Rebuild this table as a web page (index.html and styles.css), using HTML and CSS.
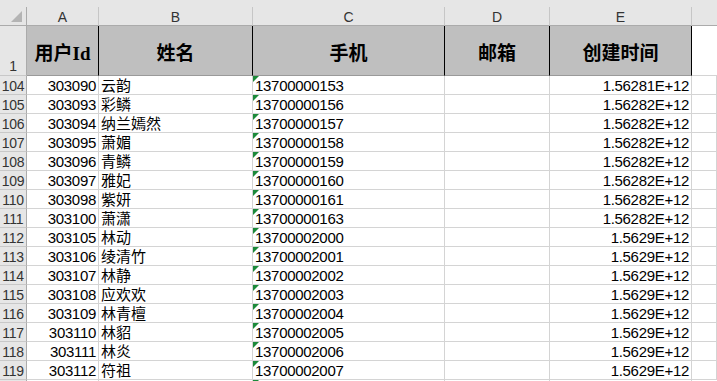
FILE: index.html
```html
<!DOCTYPE html>
<html lang="zh-CN">
<head>
<meta charset="utf-8">
<title>Sheet</title>
<link rel="stylesheet" href="styles.css">
</head>
<body>
<div class="sheet">
  <div class="strip"></div>

  <div class="corner"><svg width="11" height="11" viewBox="0 0 11 11"><polygon points="11,0 11,11 0,11" fill="#b4b4b4"/></svg></div>
  <div class="colhead">A</div>
  <div class="colhead">B</div>
  <div class="colhead">C</div>
  <div class="colhead">D</div>
  <div class="colhead">E</div>
  <div class="colhead last"></div>

  <div class="rowhead first">1</div>
  <div class="hd">用户Id</div>
  <div class="hd">姓名</div>
  <div class="hd">手机</div>
  <div class="hd">邮箱</div>
  <div class="hd">创建时间</div>
  <div class="hd blank"></div>

  <div class="rowhead">104</div><div class="c num">303090</div><div class="c txt">云韵</div><div class="c tel">13700000153</div><div class="c"></div><div class="c num">1.56281E+12</div><div class="c"></div>
  <div class="rowhead">105</div><div class="c num">303093</div><div class="c txt">彩鳞</div><div class="c tel">13700000156</div><div class="c"></div><div class="c num">1.56282E+12</div><div class="c"></div>
  <div class="rowhead">106</div><div class="c num">303094</div><div class="c txt">纳兰嫣然</div><div class="c tel">13700000157</div><div class="c"></div><div class="c num">1.56282E+12</div><div class="c"></div>
  <div class="rowhead">107</div><div class="c num">303095</div><div class="c txt">萧媚</div><div class="c tel">13700000158</div><div class="c"></div><div class="c num">1.56282E+12</div><div class="c"></div>
  <div class="rowhead">108</div><div class="c num">303096</div><div class="c txt">青鳞</div><div class="c tel">13700000159</div><div class="c"></div><div class="c num">1.56282E+12</div><div class="c"></div>
  <div class="rowhead">109</div><div class="c num">303097</div><div class="c txt">雅妃</div><div class="c tel">13700000160</div><div class="c"></div><div class="c num">1.56282E+12</div><div class="c"></div>
  <div class="rowhead">110</div><div class="c num">303098</div><div class="c txt">紫妍</div><div class="c tel">13700000161</div><div class="c"></div><div class="c num">1.56282E+12</div><div class="c"></div>
  <div class="rowhead">111</div><div class="c num">303100</div><div class="c txt">萧潇</div><div class="c tel">13700000163</div><div class="c"></div><div class="c num">1.56282E+12</div><div class="c"></div>
  <div class="rowhead">112</div><div class="c num">303105</div><div class="c txt">林动</div><div class="c tel">13700002000</div><div class="c"></div><div class="c num">1.5629E+12</div><div class="c"></div>
  <div class="rowhead">113</div><div class="c num">303106</div><div class="c txt">绫清竹</div><div class="c tel">13700002001</div><div class="c"></div><div class="c num">1.5629E+12</div><div class="c"></div>
  <div class="rowhead">114</div><div class="c num">303107</div><div class="c txt">林静</div><div class="c tel">13700002002</div><div class="c"></div><div class="c num">1.5629E+12</div><div class="c"></div>
  <div class="rowhead">115</div><div class="c num">303108</div><div class="c txt">应欢欢</div><div class="c tel">13700002003</div><div class="c"></div><div class="c num">1.5629E+12</div><div class="c"></div>
  <div class="rowhead">116</div><div class="c num">303109</div><div class="c txt">林青檀</div><div class="c tel">13700002004</div><div class="c"></div><div class="c num">1.5629E+12</div><div class="c"></div>
  <div class="rowhead">117</div><div class="c num">303110</div><div class="c txt">林貂</div><div class="c tel">13700002005</div><div class="c"></div><div class="c num">1.5629E+12</div><div class="c"></div>
  <div class="rowhead">118</div><div class="c num">303111</div><div class="c txt">林炎</div><div class="c tel">13700002006</div><div class="c"></div><div class="c num">1.5629E+12</div><div class="c"></div>
  <div class="rowhead">119</div><div class="c num">303112</div><div class="c txt">符祖</div><div class="c tel">13700002007</div><div class="c"></div><div class="c num">1.5629E+12</div><div class="c"></div>
  <div class="rowhead"></div><div class="c num"></div><div class="c txt"></div><div class="c tel"></div><div class="c"></div><div class="c num"></div><div class="c"></div>
</div>
</body>
</html>
```

FILE: styles.css
```css
html, body {
  margin: 0;
  padding: 0;
  background: #ffffff;
  overflow: hidden;
}

.sheet {
  display: grid;
  grid-template-columns: 27px 72px 154px 192px 105px 142px 1fr;
  grid-template-rows: 7px 19px 50px;
  grid-auto-rows: 19px;
  width: 717px;
  height: 381px;
  overflow: hidden;
  font-family: "Liberation Sans", "Noto Sans CJK SC", sans-serif;
  font-size: 15px;
  color: #000;
}

.sheet > div {
  box-sizing: border-box;
  min-width: 0;
  overflow: hidden;
  white-space: nowrap;
}

.strip {
  grid-column: 1 / -1;
  background: #e6e6e6;
}

.corner {
  background: #e6e6e6;
  border-right: 1px solid #ababab;
  border-bottom: 1px solid #ababab;
  display: flex;
  justify-content: flex-end;
  align-items: flex-end;
  padding: 0 4px 3px 0;
}

.corner svg {
  display: block;
}

.colhead {
  background: #e6e6e6;
  border-right: 1px solid #c6c6c6;
  border-bottom: 1px solid #ababab;
  text-align: center;
  font-size: 14px;
  line-height: 16px;
  padding-top: 2px;
  color: #333;
}

.colhead.last {
  border-right: none;
}

.rowhead {
  background: #e6e6e6;
  border-right: 1px solid #ababab;
  border-bottom: 1px solid #c8c8c8;
  text-align: center;
  font-size: 14px;
  line-height: 16px;
  padding-top: 2px;
  color: #333;
  letter-spacing: -0.3px;
}

.rowhead.first {
  display: flex;
  align-items: flex-end;
  justify-content: center;
  padding: 0 0 1px 0;
}

.hd {
  background: #bfbfbf;
  border-right: 1px solid #000;
  border-bottom: 1px solid #9a9a9a;
  display: flex;
  align-items: center;
  justify-content: center;
  font-family: "Liberation Serif", "Noto Sans CJK SC", serif;
  font-weight: bold;
  font-size: 19px;
  padding-top: 1px;
}

.hd.blank {
  background: #ffffff;
  border-right: none;
  border-bottom: 1px solid #d4d4d4;
}

.c {
  position: relative;
  border-right: 1px solid #d4d4d4;
  border-bottom: 1px solid #d4d4d4;
  line-height: 16px;
  padding: 2px 2px 0 2px;
}

.c:last-child {
  border-right: none;
}

.num {
  text-align: right;
  letter-spacing: -0.3px;
}

.txt {
  text-align: left;
}

.tel {
  letter-spacing: -0.3px;
}

.tel::before {
  content: "";
  position: absolute;
  left: 0;
  top: 0;
  width: 0;
  height: 0;
  border-top: 6px solid #1c8a3a;
  border-right: 6px solid transparent;
}
```
